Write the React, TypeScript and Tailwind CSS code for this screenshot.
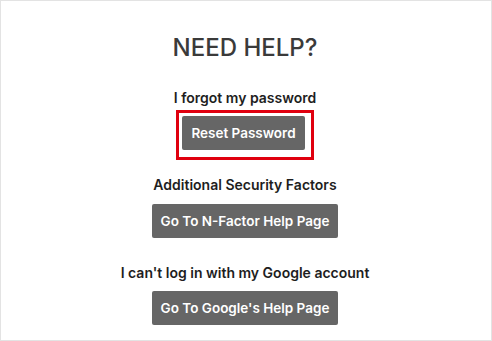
import React from "react";

const font = { fontFamily: "Inter, 'Noto Sans', sans-serif" };

function Btn({ children }: { children: React.ReactNode }) {
  return (
    <button className="h-[34px] px-[9px] rounded-[2px] bg-[#666666] text-white text-[13.5px] leading-[17px] font-semibold flex items-center justify-center">
      {children}
    </button>
  );
}

export default function App() {
  return (
    <div
      className="w-[492px] h-[341px] border border-[#e3e3e3] bg-white overflow-hidden"
      style={font}
    >
      <div className="w-[488px] flex flex-col items-center">
        <h1 className="mt-[32px] text-[24px] leading-[29px] font-medium text-[#3a3a3a]">
          NEED HELP?
        </h1>
        <p className="mt-[27px] text-[14px] leading-[17px] font-semibold text-[#1e1e1e]">
          I forgot my password
        </p>
        <div className="mt-[4px] border-[3px] border-[#e0000f] pl-[3px] pt-[3px] pr-[6px] pb-[7px]">
          <Btn>Reset Password</Btn>
        </div>
        <p className="mt-[16px] text-[14px] leading-[17px] font-semibold text-[#1e1e1e]">
          Additional Security Factors
        </p>
        <div className="mt-[11px]">
          <Btn>Go To N-Factor Help Page</Btn>
        </div>
        <p className="mt-[26px] text-[14px] leading-[17px] font-semibold text-[#1e1e1e]">
          I can't log in with my Google account
        </p>
        <div className="mt-[10px]">
          <Btn>Go To Google's Help Page</Btn>
        </div>
      </div>
    </div>
  );
}
